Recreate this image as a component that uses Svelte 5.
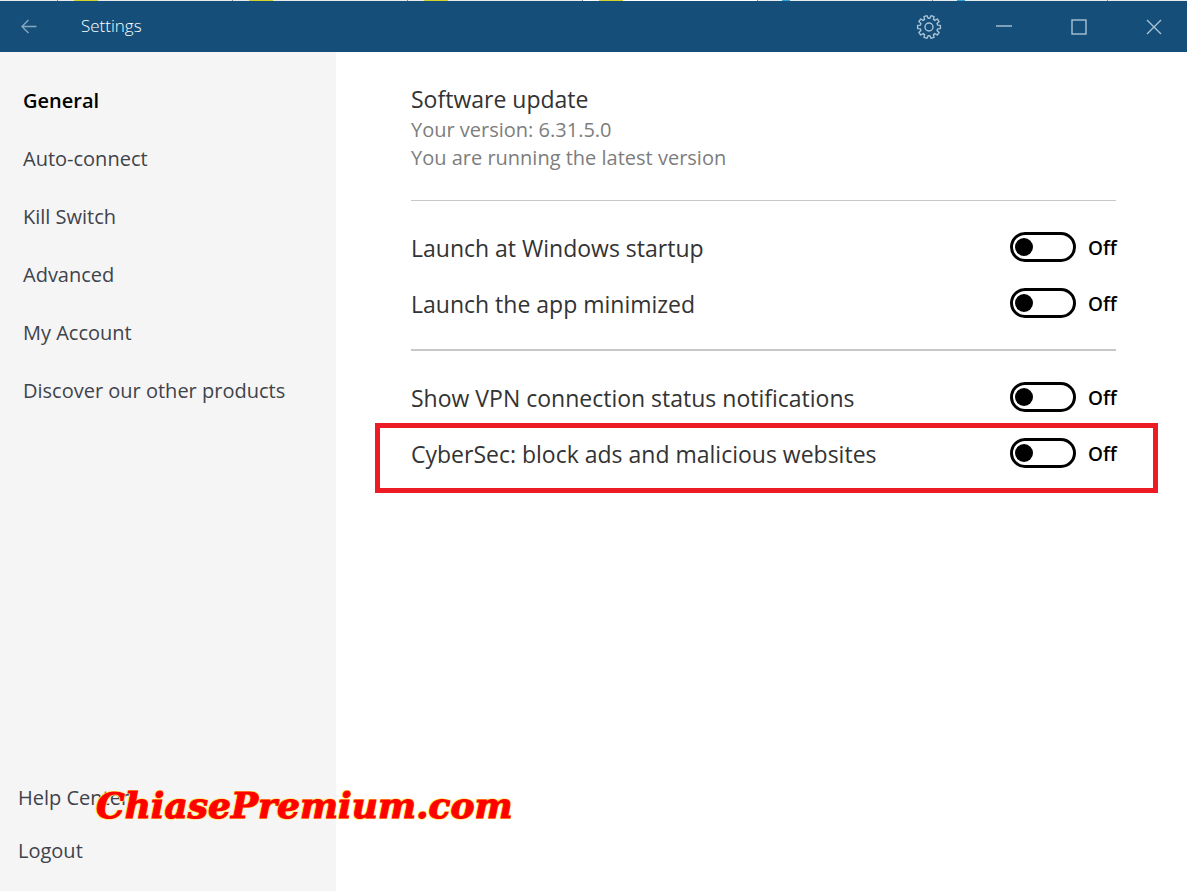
<script lang="ts">
  type Toggle = { id: string; label: string; on: boolean; marked?: boolean };

  const tabs = ["yellow", "yellow", "yellow", "yellow active", "blue", "blue", "plain"];

  const sections = [
    "General",
    "Auto-connect",
    "Kill Switch",
    "Advanced",
    "My Account",
    "Discover our other products",
  ];

  let current = $state("General");

  let startup: Toggle[] = $state([
    { id: "startup", label: "Launch at Windows startup", on: false },
    { id: "minimized", label: "Launch the app minimized", on: false },
  ]);

  let alerts: Toggle[] = $state([
    { id: "notify", label: "Show VPN connection status notifications", on: false },
    { id: "cybersec", label: "CyberSec: block ads and malicious websites", on: false, marked: true },
  ]);

  // outline of a cog with flat teeth, centred on 0,0
  function cog(teeth: number, outer: number, inner: number) {
    const step = (Math.PI * 2) / teeth;
    const pts: string[] = [];
    for (let i = 0; i < teeth; i++) {
      const mid = (i + 0.5) * step - Math.PI / 2;
      for (const [r, a] of [
        [inner, -0.34],
        [outer, -0.22],
        [outer, 0.22],
        [inner, 0.34],
      ]) {
        const t = mid + a * step;
        pts.push(`${(r * Math.cos(t)).toFixed(2)} ${(r * Math.sin(t)).toFixed(2)}`);
      }
    }
    return `M${pts.join("L")}Z`;
  }
</script>

{#snippet row(item: Toggle)}
  <div class="row" class:marked={item.marked}>
    <label class="row-label" for={item.id}>{item.label}</label>
    <input class="switch" type="checkbox" role="switch" id={item.id} bind:checked={item.on} />
    <span class="state">{item.on ? "On" : "Off"}</span>
  </div>
{/snippet}

<div class="window">
  <div class="strip">
    {#each tabs as tab}
      <span class="tab {tab}"></span>
    {/each}
  </div>

  <header class="titlebar">
    <button class="tb-btn back" aria-label="Back">
      <svg width="16" height="16" viewBox="0 0 16 16">
        <path d="M15.5 7.5H1M7.5 1L1 7.5 7.5 14" />
      </svg>
    </button>
    <h1 class="title">Settings</h1>
    <button class="tb-btn" aria-label="Preferences">
      <svg width="26" height="26" viewBox="-13 -13 26 26">
        <path d={cog(10, 11.5, 8.8)} stroke-linejoin="round" />
        <circle r="4" />
      </svg>
    </button>
    <button class="tb-btn" aria-label="Minimize">
      <svg width="16" height="16" viewBox="0 0 16 16"><path d="M0 7h16" /></svg>
    </button>
    <button class="tb-btn" aria-label="Maximize">
      <svg width="16" height="16" viewBox="0 0 16 16">
        <rect x="1" y="1" width="14" height="14" />
      </svg>
    </button>
    <button class="tb-btn" aria-label="Close">
      <svg width="16" height="16" viewBox="0 0 16 16">
        <path d="M1 1l14 14M15 1L1 15" />
      </svg>
    </button>
  </header>

  <div class="body">
    <nav class="sidebar">
      <ul class="nav-list">
        {#each sections as name (name)}
          <li>
            <button class="nav-btn" class:active={current === name} onclick={() => (current = name)}>
              {name}
            </button>
          </li>
        {/each}
      </ul>
      <div class="bottom">
        <a class="link" href="#help">Help Center</a>
        <button class="link">Logout</button>
      </div>
      <div class="watermark">ChiasePremium.com</div>
    </nav>

    <main class="content">
      <section class="update">
        <h2 class="heading">Software update</h2>
        <p>Your version: 6.31.5.0</p>
        <p>You are running the latest version</p>
      </section>

      <section class="group">
        {#each startup as item (item.id)}
          {@render row(item)}
        {/each}
      </section>

      <section class="group thick">
        {#each alerts as item (item.id)}
          {@render row(item)}
        {/each}
      </section>
    </main>
  </div>
</div>

<style>
  :global(body) {
    margin: 0;
    background: #fff;
  }
  .window {
    min-height: 100vh;
    display: flex;
    flex-direction: column;
    font-family: "Segoe UI", "Open Sans", "Noto Sans", sans-serif;
    font-size: 20px;
    color: #333;
  }
  button {
    border: 0;
    padding: 0;
    background: none;
    font: inherit;
    color: inherit;
    cursor: pointer;
  }

  /* ── Tabs peeking out above the window ── */
  .strip {
    display: flex;
    height: 1px;
    padding-left: 57px;
    background: #e8ecec;
    overflow: hidden;
  }
  .tab {
    flex: 0 0 175px;
    box-sizing: border-box;
    border-left: 1px solid #8a8f92;
    padding-left: 16px;
  }
  .tab.active { background: #fff; }
  .tab::before {
    content: "";
    display: block;
    width: 24px;
    height: 1px;
  }
  .tab.yellow::before { background: #d0d32c; }
  .tab.blue::before {
    width: 8px;
    margin-left: 8px;
    background: #2fa4dc;
  }

  /* ── Title bar ── */
  .titlebar {
    display: flex;
    align-items: center;
    gap: 8px;
    height: 51px;
    background: #154f79;
    color: #fff;
  }
  .title {
    flex: 1;
    margin: 0 0 0 16px;
    padding-bottom: 2px;
    font-size: 17px;
    font-weight: 300;
  }
  .tb-btn {
    width: 67px;
    height: 100%;
    display: grid;
    place-items: center;
  }
  .tb-btn.back { width: 57px; }
  .tb-btn svg {
    fill: none;
    stroke: #a9c3d6;
    stroke-width: 1.4;
  }
  .tb-btn.back svg { stroke: #86a8c0; }

  .body {
    flex: 1;
    display: flex;
  }

  /* ── Sidebar ── */
  .sidebar {
    position: relative;
    flex: 0 0 336px;
    box-sizing: border-box;
    display: flex;
    flex-direction: column;
    justify-content: space-between;
    padding: 19px 0 14px;
    background: #f5f5f5;
    color: #40434b;
  }
  .nav-list {
    list-style: none;
    margin: 0;
    padding: 0;
  }
  .nav-btn {
    display: block;
    width: 100%;
    height: 58px;
    padding-left: 23px;
    text-align: left;
  }
  .nav-btn.active {
    color: #000;
    font-weight: 600;
  }
  .bottom {
    display: flex;
    flex-direction: column;
    align-items: flex-start;
    padding-left: 18px;
  }
  .link {
    line-height: 53px;
    color: inherit;
    text-decoration: none;
  }
  .watermark {
    position: absolute;
    left: 96px;
    bottom: 66px;
    font: italic 700 36px/40px "DejaVu Serif", serif;
    color: #f00;
    -webkit-text-stroke: 1px #f00;
    text-shadow:
      -1px -1px 0 #ffe94d,
      1px -1px 0 #ffe94d,
      -1px 1px 0 #ffe94d,
      1px 1px 0 #ffe94d;
    pointer-events: none;
  }

  /* ── Content ── */
  .content {
    flex: 1;
    padding: 32px 71px 32px 75px;
  }
  .update { padding-bottom: 28px; }
  .update p {
    margin: 0;
    line-height: 28px;
    color: #7d7d7d;
  }
  .heading {
    margin: 0;
    padding-bottom: 2px;
    font-size: 23px;
    font-weight: 400;
    line-height: 30px;
  }
  .group {
    border-top: 1px solid #c8c8c8;
    padding: 18px 0;
  }
  .group.thick { border-top-width: 2px; }
  .row {
    position: relative;
    display: flex;
    align-items: center;
    height: 56px;
  }
  .row-label {
    flex: 1;
    padding-top: 2px;
    font-size: 23px;
  }
  .switch {
    appearance: none;
    display: flex;
    align-items: center;
    box-sizing: border-box;
    width: 66px;
    height: 30px;
    margin: 0 12px 0 0;
    padding: 0 2px;
    border: 3px solid #000;
    border-radius: 15px;
    background: #fff;
  }
  .switch::before {
    content: "";
    width: 18px;
    height: 18px;
    border-radius: 50%;
    background: #000;
  }
  .switch:checked { justify-content: flex-end; }
  .state {
    width: 28px;
    padding-top: 2px;
    font-size: 19px;
    font-weight: 600;
    color: #000;
  }
  .marked::after {
    content: "";
    position: absolute;
    inset: -2px -42px -12px -36px;
    border: 5px solid #ed1c24;
    pointer-events: none;
  }
</style>
